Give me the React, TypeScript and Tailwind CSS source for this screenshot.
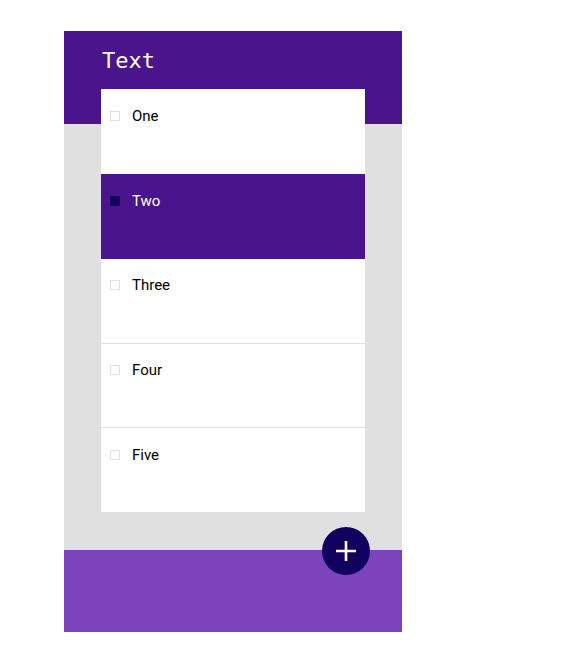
import React from "react";

const items = [
  { t: "One", cls: "h-[85px] pt-[17px]" },
  { t: "Two", cls: "h-[85px] pt-[17px]" },
  { t: "Three", cls: "h-[85px] pt-[16px] border-b border-[#e0e0e0]" },
  { t: "Four", cls: "h-[84px] pt-[16px] border-b border-[#e0e0e0]" },
  { t: "Five", cls: "h-[84px] pt-[17px]" },
];

export default function App() {
  return (
    <div className="w-[588px] h-[649px] bg-white" style={{ fontFamily: "Roboto, Arial, sans-serif" }}>
      <div className="relative ml-[64px] pt-[31px] w-[338px]">
        <div className="h-[93px] bg-[#4a148c] pl-[38px] pt-[16px]">
          <span className="text-white text-[22px] leading-[28px]" style={{ fontFamily: '"DejaVu Sans Mono", "Liberation Mono", monospace' }}>
            Text
          </span>
        </div>
        <div className="bg-[#e0e0e0] h-[426px] pl-[37px]">
          <div className="relative -top-[35px] w-[264px] bg-white flex flex-col">
            {items.map((it, i) => {
              const sel = i === 1;
              return (
                <div
                  key={it.t}
                  className={`${it.cls} flex items-start pl-[9px] ${sel ? "bg-[#4a148c] text-white" : "bg-white text-black"}`}
                >
                  <div className="h-[20px] flex items-center">
                    <div className={`w-[10px] h-[10px] ${sel ? "bg-[#12005e]" : "border border-[#e0e0e0] bg-white"}`} />
                  </div>
                  <span className="ml-[12px] text-[15px] leading-[20px]">{it.t}</span>
                </div>
              );
            })}
          </div>
        </div>
        <div className="h-[82px] bg-[#7c43bd]" />
        <div className="absolute left-[258px] top-[527px] w-[48px] h-[48px] rounded-full bg-[#12005e] flex items-center justify-center">
          <svg width="24" height="24" viewBox="0 0 24 24">
            <path d="M12 2v20M2 12h20" stroke="white" strokeWidth="2.6" />
          </svg>
        </div>
      </div>
    </div>
  );
}
